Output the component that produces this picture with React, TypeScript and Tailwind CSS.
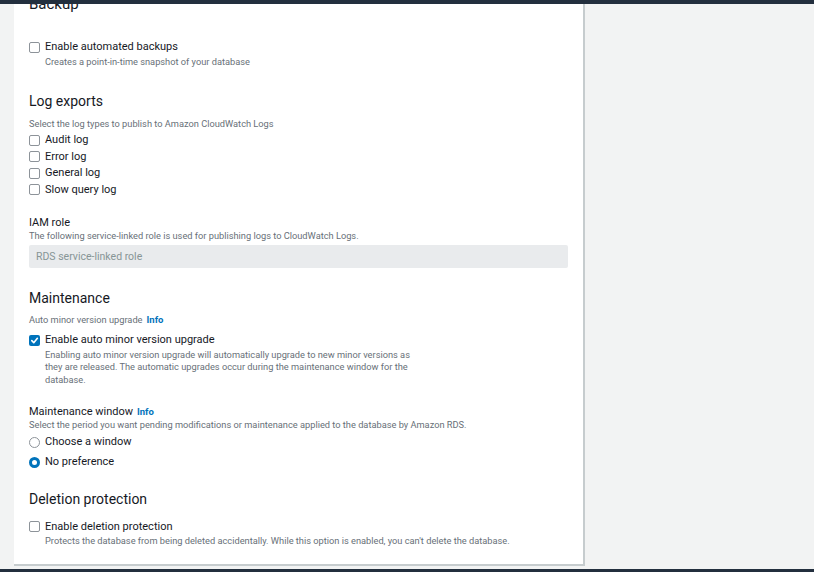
import React from "react";

const font = { fontFamily: "Roboto, 'Noto Sans', sans-serif" };

function Checkbox({ checked = false }: { checked?: boolean }) {
  return checked ? (
    <span className="flex h-[11px] w-[11px] shrink-0 items-center justify-center rounded-[2px] bg-[#0073bb]">
      <svg width="9" height="9" viewBox="0 0 10 10" fill="none">
        <path d="M2 5.2 L4.2 7.4 L8.2 2.6" stroke="white" strokeWidth="1.8" strokeLinecap="round" strokeLinejoin="round" />
      </svg>
    </span>
  ) : (
    <span className="h-[11px] w-[11px] shrink-0 rounded-[2px] border border-[#8d9399] bg-white" />
  );
}

function Radio({ checked = false }: { checked?: boolean }) {
  return checked ? (
    <span className="h-[11px] w-[11px] shrink-0 rounded-full border-[3.5px] border-[#0073bb] bg-white" />
  ) : (
    <span className="h-[11px] w-[11px] shrink-0 rounded-full border border-[#8d9399] bg-white" />
  );
}

function Option({
  label,
  description,
  checked,
  radio,
}: {
  label: string;
  description?: React.ReactNode;
  checked?: boolean;
  radio?: boolean;
}) {
  return (
    <div>
      <div className="flex h-[16.5px] items-center gap-[5px]">
        {radio ? <Radio checked={checked} /> : <Checkbox checked={checked} />}
        <span className="text-[11px] text-[#16191f]">{label}</span>
      </div>
      {description && (
        <p className="pl-[16px] text-[9.25px] leading-[12.5px] text-[#687078]">{description}</p>
      )}
    </div>
  );
}

function Info() {
  return <span className="ml-[4px] text-[9.5px] font-bold text-[#0073bb]">Info</span>;
}

export default function App() {
  return (
    <div className="flex h-[572px] w-[814px] flex-col overflow-hidden bg-[#f2f3f3]" style={font}>
      <div className="h-[4px] shrink-0 bg-[#232f3e]" />
      <div className="flex min-h-0 flex-1">
        <div className="w-[14px] shrink-0" />
        <div className="mb-[3px] w-[571px] shrink-0 overflow-hidden border-r-2 border-b-2 border-[#c6ccce] bg-white pl-[15px] pr-[15px]">
          <h2 className="-mt-[10px] text-[15px] leading-[20px] text-[#16191f]">Backup</h2>
          <div className="mt-[25px]">
            <Option label="Enable automated backups" description="Creates a point-in-time snapshot of your database" />
          </div>

          <h2 className="mt-[23px] text-[14px] leading-[20px] text-[#16191f]">Log exports</h2>
          <p className="mt-[6px] text-[9.25px] leading-[13px] text-[#687078]">
            Select the log types to publish to Amazon CloudWatch Logs
          </p>
          <div className="mt-[2px]">
            <Option label="Audit log" />
            <Option label="Error log" />
            <Option label="General log" />
            <Option label="Slow query log" />
          </div>

          <h3 className="mt-[17px] text-[11px] leading-[15px] text-[#16191f]">IAM role</h3>
          <p className="-mt-[1px] text-[9.25px] leading-[13px] text-[#687078]">
            The following service-linked role is used for publishing logs to CloudWatch Logs.
          </p>
          <div className="mt-[3px] flex h-[23px] items-center rounded-[2px] bg-[#e9ebed] px-[7px] text-[10.5px] text-[#879596]">
            RDS service-linked role
          </div>

          <h2 className="mt-[20px] text-[14px] leading-[20px] text-[#16191f]">Maintenance</h2>
          <p className="mt-[5px] text-[9.25px] leading-[13px] text-[#687078]">
            Auto minor version upgrade
            <Info />
          </p>
          <div className="mt-[6px]">
            <Option
              checked
              label="Enable auto minor version upgrade"
              description={
                <>
                  Enabling auto minor version upgrade will automatically upgrade to new minor versions as
                  <br />
                  they are released. The automatic upgrades occur during the maintenance window for the
                  <br />
                  database.
                </>
              }
            />
          </div>

          <h3 className="mt-[18px] text-[11px] leading-[15px] text-[#16191f]">
            Maintenance window
            <Info />
          </h3>
          <p className="-mt-[1px] text-[9.25px] leading-[13px] text-[#687078]">
            Select the period you want pending modifications or maintenance applied to the database by Amazon RDS.
          </p>
          <div className="mt-[3px] flex flex-col gap-[3.5px]">
            <Option radio label="Choose a window" />
            <Option radio checked label="No preference" />
          </div>

          <h2 className="mt-[18px] text-[14px] leading-[20px] text-[#16191f]">Deletion protection</h2>
          <div className="mt-[10px]">
            <Option
              label="Enable deletion protection"
              description="Protects the database from being deleted accidentally. While this option is enabled, you can't delete the database."
            />
          </div>
        </div>
        <div className="flex-1" />
      </div>
      <div className="h-[3px] shrink-0 bg-[#232f3e]" />
    </div>
  );
}
